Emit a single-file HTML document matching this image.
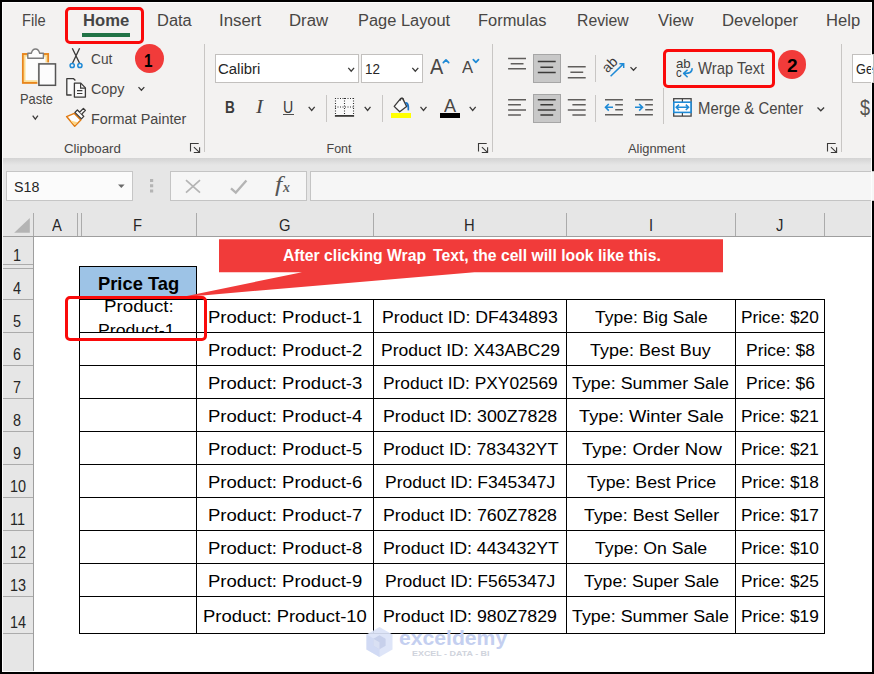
<!DOCTYPE html>
<html lang="en"><head><meta charset="utf-8"><title>Excel Wrap Text</title>
<style>
html,body{margin:0;padding:0;background:#000;}
body{width:874px;height:674px;overflow:hidden;position:relative;font-family:"Liberation Sans",sans-serif;}
#app{position:absolute;left:0;top:0;width:874px;height:674px;overflow:hidden;background:#000;}
.r{position:absolute;}
.t{position:absolute;white-space:pre;line-height:1;transform-origin:0 0;}
svg{position:absolute;overflow:visible;}
</style></head><body><div id="app">
<div class="r" style="left:2.00px;top:2.00px;width:870.00px;height:155.50px;background:#f3f2f1;"></div>
<div class="r" style="left:2.00px;top:157.50px;width:870.00px;height:7.50px;background:linear-gradient(#d3d3d3,#e6e6e6);"></div>
<div class="r" style="left:2.00px;top:165.00px;width:870.00px;height:72.00px;background:#e6e6e6;"></div>
<div class="r" style="left:2.00px;top:237.00px;width:870.00px;height:435.00px;background:#fff;"></div>
<div class="r" style="left:2.00px;top:237.00px;width:31.00px;height:435.00px;background:#e6e6e6;"></div>
<span class="t" style="left:21.90px;top:13.03px;font-size:16.85px;color:#484644;transform:scaleX(0.8697);">File</span>
<span class="t" style="left:156.60px;top:13.03px;font-size:16.85px;color:#484644;transform:scaleX(0.9763);">Data</span>
<span class="t" style="left:219.30px;top:13.03px;font-size:16.85px;color:#484644;transform:scaleX(0.9992);">Insert</span>
<span class="t" style="left:289.20px;top:13.03px;font-size:16.85px;color:#484644;transform:scaleX(0.9961);">Draw</span>
<span class="t" style="left:357.60px;top:13.03px;font-size:16.85px;color:#484644;transform:scaleX(0.9743);">Page Layout</span>
<span class="t" style="left:478.40px;top:13.03px;font-size:16.85px;color:#484644;transform:scaleX(0.9761);">Formulas</span>
<span class="t" style="left:576.50px;top:13.03px;font-size:16.85px;color:#484644;transform:scaleX(0.9370);">Review</span>
<span class="t" style="left:657.70px;top:13.03px;font-size:16.85px;color:#484644;transform:scaleX(0.9824);">View</span>
<span class="t" style="left:721.70px;top:13.03px;font-size:16.85px;color:#484644;transform:scaleX(0.9915);">Developer</span>
<span class="t" style="left:826.30px;top:13.03px;font-size:16.85px;color:#484644;transform:scaleX(0.9846);">Help</span>
<span class="t" style="left:82.60px;top:13.03px;font-size:16.85px;color:#454545;transform:scaleX(0.9860);font-weight:bold;">Home</span>
<div class="r" style="left:82.00px;top:33.00px;width:48.00px;height:4.00px;background:#217346;"></div>
<div class="r" style="left:65px;top:7px;width:79px;height:37px;box-sizing:border-box;border:3px solid #fa0a0a;border-radius:5px;"></div>
<span class="t" style="left:19.50px;top:92.27px;font-size:14.33px;color:#484644;transform:scaleX(0.9016);">Paste</span>
<span class="t" style="left:90.60px;top:52.25px;font-size:14.47px;color:#484644;transform:scaleX(0.9469);">Cut</span>
<span class="t" style="left:90.60px;top:82.47px;font-size:14.33px;color:#484644;transform:scaleX(0.9985);">Copy</span>
<span class="t" style="left:90.60px;top:111.81px;font-size:14.04px;color:#484644;transform:scaleX(1.0268);">Format Painter</span>
<span class="t" style="left:63.70px;top:142.92px;font-size:12.50px;color:#484644;transform:scaleX(1.0636);">Clipboard</span>
<div class="r" style="left:204.00px;top:43.70px;width:1.00px;height:108.70px;background:#c8c6c4;"></div>
<div class="r" style="left:135.1px;top:43.9px;width:29.1px;height:29.1px;border-radius:50%;background:#f13b3a;"></div>
<div class="r" style="left:214.7px;top:53.8px;width:144.2px;height:29.3px;box-sizing:border-box;border:1px solid #c2c0be;background:#fff;"></div>
<div class="r" style="left:360.8px;top:53.8px;width:62.2px;height:29.3px;box-sizing:border-box;border:1px solid #c2c0be;background:#fff;"></div>
<span class="t" style="left:218.00px;top:62.01px;font-size:14.75px;color:#262626;transform:scaleX(1.0118);">Calibri</span>
<span class="t" style="left:365.00px;top:62.01px;font-size:14.75px;color:#262626;transform:scaleX(0.9102);">12</span>
<span class="t" style="left:430.30px;top:56.39px;font-size:21.63px;color:#484644;transform:scaleX(0.9178);">A</span>
<span class="t" style="left:462.20px;top:60.43px;font-size:16.85px;color:#484644;transform:scaleX(0.9830);">A</span>
<span class="t" style="left:224.61px;top:98.71px;font-size:16.99px;color:#3a3a3a;transform:scaleX(0.8000);font-weight:bold;">B</span>
<span class="t" style="left:255.51px;top:97.60px;font-size:18.63px;color:#444;transform:scaleX(1.1303);font-family:'Liberation Serif',serif;font-style:italic;">I</span>
<span class="t" style="left:283.40px;top:98.71px;font-size:16.99px;color:#3a3a3a;transform:scaleX(0.8336);">U</span>
<div class="r" style="left:282.60px;top:114.10px;width:11.80px;height:1.40px;background:#4f4f4f;"></div>
<div class="r" style="left:326.00px;top:95.00px;width:1.00px;height:26.60px;background:#c8c6c4;"></div>
<div class="r" style="left:382.00px;top:95.00px;width:1.00px;height:26.60px;background:#c8c6c4;"></div>
<span class="t" style="left:444.20px;top:96.74px;font-size:18.26px;color:#484644;transform:scaleX(0.9891);">A</span>
<div class="r" style="left:391.00px;top:112.90px;width:20.20px;height:5.00px;background:#ffff00;"></div>
<div class="r" style="left:439.90px;top:112.90px;width:20.10px;height:5.00px;background:#000;"></div>
<span class="t" style="left:326.50px;top:142.92px;font-size:12.50px;color:#484644;transform:scaleX(1.0000);">Font</span>
<div class="r" style="left:492.30px;top:43.70px;width:1.00px;height:108.70px;background:#c8c6c4;"></div>
<span class="t" style="left:697.60px;top:61.28px;font-size:15.73px;color:#484644;transform:scaleX(0.9454);">Wrap Text</span>
<span class="t" style="left:697.60px;top:101.17px;font-size:16.57px;color:#484644;transform:scaleX(0.8991);">Merge &amp; Center</span>
<span class="t" style="left:628.40px;top:142.92px;font-size:12.50px;color:#484644;transform:scaleX(1.0295);">Alignment</span>
<div class="r" style="left:841.20px;top:43.70px;width:1.00px;height:108.70px;background:#c8c6c4;"></div>
<div class="r" style="left:595.00px;top:54.80px;width:1.00px;height:27.00px;background:#c8c6c4;"></div>
<div class="r" style="left:595.00px;top:95.20px;width:1.00px;height:26.60px;background:#c8c6c4;"></div>
<div class="r" style="left:663.20px;top:88.00px;width:1.00px;height:36.40px;background:#c8c6c4;"></div>
<div class="r" style="left:532.5px;top:54px;width:28.5px;height:28.8px;box-sizing:border-box;border:1px solid #a6a6a6;background:#c8c8c8;"></div>
<div class="r" style="left:532.5px;top:94.2px;width:28.5px;height:28.8px;box-sizing:border-box;border:1px solid #a6a6a6;background:#c8c8c8;"></div>
<div class="r" style="left:663px;top:49px;width:112px;height:39px;box-sizing:border-box;border:3px solid #fa0a0a;border-radius:5px;"></div>
<div class="r" style="left:778.1px;top:50.4px;width:28.4px;height:28.4px;border-radius:50%;background:#f13b3a;"></div>
<div class="r" style="left:851.7px;top:54px;width:22px;height:29px;box-sizing:border-box;border:1px solid #c2c0be;background:#fff;"></div>
<span class="t" style="left:855.50px;top:62.01px;font-size:14.75px;color:#262626;transform:scaleX(0.8635);">Ge</span>
<span class="t" style="left:860.30px;top:97.05px;font-size:22.50px;color:#55534f;transform:scaleX(0.8000);">$</span>
<div class="r" style="left:5.8px;top:171px;width:127.3px;height:29.8px;box-sizing:border-box;border:1px solid #c6c6c6;background:#fbfbfb;"></div>
<span class="t" style="left:13.50px;top:179.93px;font-size:14.61px;color:#262626;transform:scaleX(0.9769);">S18</span>
<div class="r" style="left:169.9px;top:171px;width:136.9px;height:29.8px;box-sizing:border-box;border:1px solid #c4c4c4;background:#f6f6f6;"></div>
<div class="r" style="left:309.5px;top:171px;width:570px;height:29.8px;box-sizing:border-box;border:1px solid #c4c4c4;background:#f6f6f6;"></div>
<span class="t" style="left:275.40px;top:174.20px;font-size:21.50px;color:#555;transform:scaleX(1.2000);font-family:'Liberation Serif',serif;font-style:italic;">f</span>
<span class="t" style="left:283.01px;top:180.46px;font-size:14.50px;color:#5e5e5e;transform:scaleX(0.9508);font-family:'Liberation Serif',serif;font-weight:bold;font-style:italic;">x</span>
<div class="r" style="left:2.00px;top:236.00px;width:870.00px;height:1.00px;background:#9e9e9e;"></div>
<div class="r" style="left:33.00px;top:213.00px;width:1.00px;height:23.00px;background:#ababab;"></div>
<div class="r" style="left:77.20px;top:213.00px;width:1.00px;height:23.00px;background:#ababab;"></div>
<div class="r" style="left:80.70px;top:213.00px;width:1.00px;height:23.00px;background:#ababab;"></div>
<div class="r" style="left:196.30px;top:213.00px;width:1.00px;height:23.00px;background:#ababab;"></div>
<div class="r" style="left:373.20px;top:213.00px;width:1.00px;height:23.00px;background:#ababab;"></div>
<div class="r" style="left:566.30px;top:213.00px;width:1.00px;height:23.00px;background:#ababab;"></div>
<div class="r" style="left:734.80px;top:213.00px;width:1.00px;height:23.00px;background:#ababab;"></div>
<div class="r" style="left:824.20px;top:213.00px;width:1.00px;height:23.00px;background:#ababab;"></div>
<span class="t" style="left:51.56px;top:218.06px;font-size:15.87px;color:#262626;transform:scaleX(0.9300);">A</span>
<span class="t" style="left:133.30px;top:218.06px;font-size:15.87px;color:#262626;transform:scaleX(0.9300);">F</span>
<span class="t" style="left:279.24px;top:218.06px;font-size:15.87px;color:#262626;transform:scaleX(0.9300);">G</span>
<span class="t" style="left:464.49px;top:218.06px;font-size:15.87px;color:#262626;transform:scaleX(0.9300);">H</span>
<span class="t" style="left:649.13px;top:218.06px;font-size:15.87px;color:#262626;transform:scaleX(0.9300);">I</span>
<span class="t" style="left:775.51px;top:218.06px;font-size:15.87px;color:#262626;transform:scaleX(0.9300);">J</span>
<svg style="left:14px;top:217.8px" width="16" height="15" viewBox="0 0 16 15"><path d="M15.8 0V14.7H0.2Z" fill="#b4b4b4"/></svg>
<div class="r" style="left:33.00px;top:237.00px;width:1.00px;height:435.00px;background:#9e9e9e;"></div>
<div class="r" style="left:2.00px;top:264.00px;width:31.00px;height:1.00px;background:#ababab;"></div>
<div class="r" style="left:2.00px;top:268.00px;width:31.00px;height:1.00px;background:#ababab;"></div>
<div class="r" style="left:2.00px;top:299.00px;width:31.00px;height:1.00px;background:#ababab;"></div>
<div class="r" style="left:2.00px;top:332.00px;width:31.00px;height:1.00px;background:#ababab;"></div>
<div class="r" style="left:2.00px;top:365.00px;width:31.00px;height:1.00px;background:#ababab;"></div>
<div class="r" style="left:2.00px;top:398.00px;width:31.00px;height:1.00px;background:#ababab;"></div>
<div class="r" style="left:2.00px;top:431.00px;width:31.00px;height:1.00px;background:#ababab;"></div>
<div class="r" style="left:2.00px;top:464.00px;width:31.00px;height:1.00px;background:#ababab;"></div>
<div class="r" style="left:2.00px;top:497.00px;width:31.00px;height:1.00px;background:#ababab;"></div>
<div class="r" style="left:2.00px;top:530.00px;width:31.00px;height:1.00px;background:#ababab;"></div>
<div class="r" style="left:2.00px;top:563.00px;width:31.00px;height:1.00px;background:#ababab;"></div>
<div class="r" style="left:2.00px;top:596.00px;width:31.00px;height:1.00px;background:#ababab;"></div>
<div class="r" style="left:2.00px;top:633.00px;width:31.00px;height:1.00px;background:#ababab;"></div>
<span class="t" style="left:12.70px;top:248.04px;font-size:16.01px;color:#262626;transform:scaleX(0.9000);">1</span>
<span class="t" style="left:12.70px;top:280.94px;font-size:16.01px;color:#262626;transform:scaleX(0.9000);">4</span>
<span class="t" style="left:12.70px;top:313.94px;font-size:16.01px;color:#262626;transform:scaleX(0.9000);">5</span>
<span class="t" style="left:12.70px;top:346.94px;font-size:16.01px;color:#262626;transform:scaleX(0.9000);">6</span>
<span class="t" style="left:12.70px;top:379.94px;font-size:16.01px;color:#262626;transform:scaleX(0.9000);">7</span>
<span class="t" style="left:12.70px;top:412.94px;font-size:16.01px;color:#262626;transform:scaleX(0.9000);">8</span>
<span class="t" style="left:12.70px;top:445.94px;font-size:16.01px;color:#262626;transform:scaleX(0.9000);">9</span>
<span class="t" style="left:9.60px;top:478.94px;font-size:16.01px;color:#262626;transform:scaleX(0.9000);">10</span>
<span class="t" style="left:10.11px;top:511.94px;font-size:16.01px;color:#262626;transform:scaleX(0.9000);">11</span>
<span class="t" style="left:9.60px;top:544.94px;font-size:16.01px;color:#262626;transform:scaleX(0.9000);">12</span>
<span class="t" style="left:9.60px;top:577.94px;font-size:16.01px;color:#262626;transform:scaleX(0.9000);">13</span>
<span class="t" style="left:9.60px;top:615.14px;font-size:16.01px;color:#262626;transform:scaleX(0.9000);">14</span>
<div class="r" style="left:80.00px;top:267.00px;width:116.00px;height:32.00px;background:#9dc3e6;"></div>
<div class="r" style="left:79.00px;top:266.00px;width:1.00px;height:368.00px;background:#000;"></div>
<div class="r" style="left:196.00px;top:266.00px;width:1.00px;height:368.00px;background:#000;"></div>
<div class="r" style="left:373.00px;top:299.00px;width:1.00px;height:335.00px;background:#000;"></div>
<div class="r" style="left:566.00px;top:299.00px;width:1.00px;height:335.00px;background:#000;"></div>
<div class="r" style="left:735.00px;top:299.00px;width:1.00px;height:335.00px;background:#000;"></div>
<div class="r" style="left:824.00px;top:299.00px;width:1.00px;height:335.00px;background:#000;"></div>
<div class="r" style="left:79.00px;top:266.00px;width:118.00px;height:1.00px;background:#000;"></div>
<div class="r" style="left:79.00px;top:299.00px;width:746.00px;height:1.00px;background:#000;"></div>
<div class="r" style="left:79.00px;top:332.00px;width:746.00px;height:1.00px;background:#000;"></div>
<div class="r" style="left:79.00px;top:365.00px;width:746.00px;height:1.00px;background:#000;"></div>
<div class="r" style="left:79.00px;top:398.00px;width:746.00px;height:1.00px;background:#000;"></div>
<div class="r" style="left:79.00px;top:431.00px;width:746.00px;height:1.00px;background:#000;"></div>
<div class="r" style="left:79.00px;top:464.00px;width:746.00px;height:1.00px;background:#000;"></div>
<div class="r" style="left:79.00px;top:497.00px;width:746.00px;height:1.00px;background:#000;"></div>
<div class="r" style="left:79.00px;top:530.00px;width:746.00px;height:1.00px;background:#000;"></div>
<div class="r" style="left:79.00px;top:563.00px;width:746.00px;height:1.00px;background:#000;"></div>
<div class="r" style="left:79.00px;top:596.00px;width:746.00px;height:1.00px;background:#000;"></div>
<div class="r" style="left:79.00px;top:633.00px;width:746.00px;height:1.00px;background:#000;"></div>
<span class="t" style="left:97.80px;top:276.14px;font-size:17.56px;color:#000;transform:scaleX(1.0441);font-weight:bold;">Price Tag</span>
<span class="t" style="left:208.00px;top:309.21px;font-size:16.99px;color:#000;transform:scaleX(1.0894);">Product: Product-1</span>
<span class="t" style="left:382.10px;top:309.21px;font-size:16.99px;color:#000;transform:scaleX(1.0397);">Product ID: DF434893</span>
<span class="t" style="left:594.60px;top:309.21px;font-size:16.99px;color:#000;transform:scaleX(1.0291);">Type: Big Sale</span>
<span class="t" style="left:741.00px;top:309.21px;font-size:16.99px;color:#000;transform:scaleX(1.0175);">Price: $20</span>
<span class="t" style="left:208.00px;top:342.21px;font-size:16.99px;color:#000;transform:scaleX(1.0894);">Product: Product-2</span>
<span class="t" style="left:380.60px;top:342.21px;font-size:16.99px;color:#000;transform:scaleX(1.0302);">Product ID: X43ABC29</span>
<span class="t" style="left:590.40px;top:342.21px;font-size:16.99px;color:#000;transform:scaleX(1.0570);">Type: Best Buy</span>
<span class="t" style="left:745.80px;top:342.21px;font-size:16.99px;color:#000;transform:scaleX(1.0277);">Price: $8</span>
<span class="t" style="left:208.00px;top:375.21px;font-size:16.99px;color:#000;transform:scaleX(1.0894);">Product: Product-3</span>
<span class="t" style="left:383.10px;top:375.21px;font-size:16.99px;color:#000;transform:scaleX(1.0224);">Product ID: PXY02569</span>
<span class="t" style="left:572.20px;top:375.21px;font-size:16.99px;color:#000;transform:scaleX(1.0522);">Type: Summer Sale</span>
<span class="t" style="left:745.80px;top:375.21px;font-size:16.99px;color:#000;transform:scaleX(1.0277);">Price: $6</span>
<span class="t" style="left:208.00px;top:408.21px;font-size:16.99px;color:#000;transform:scaleX(1.0894);">Product: Product-4</span>
<span class="t" style="left:383.10px;top:408.21px;font-size:16.99px;color:#000;transform:scaleX(1.0482);">Product ID: 300Z7828</span>
<span class="t" style="left:579.20px;top:408.21px;font-size:16.99px;color:#000;transform:scaleX(1.0799);">Type: Winter Sale</span>
<span class="t" style="left:741.00px;top:408.21px;font-size:16.99px;color:#000;transform:scaleX(1.0175);">Price: $21</span>
<span class="t" style="left:208.00px;top:441.21px;font-size:16.99px;color:#000;transform:scaleX(1.0894);">Product: Product-5</span>
<span class="t" style="left:383.10px;top:441.21px;font-size:16.99px;color:#000;transform:scaleX(1.0425);">Product ID: 783432YT</span>
<span class="t" style="left:581.80px;top:441.21px;font-size:16.99px;color:#000;transform:scaleX(1.0897);">Type: Order Now</span>
<span class="t" style="left:741.00px;top:441.21px;font-size:16.99px;color:#000;transform:scaleX(1.0175);">Price: $21</span>
<span class="t" style="left:208.00px;top:474.21px;font-size:16.99px;color:#000;transform:scaleX(1.0894);">Product: Product-6</span>
<span class="t" style="left:384.70px;top:474.21px;font-size:16.99px;color:#000;transform:scaleX(1.0299);">Product ID: F345347J</span>
<span class="t" style="left:587.20px;top:474.21px;font-size:16.99px;color:#000;transform:scaleX(1.0443);">Type: Best Price</span>
<span class="t" style="left:741.00px;top:474.21px;font-size:16.99px;color:#000;transform:scaleX(1.0175);">Price: $18</span>
<span class="t" style="left:208.00px;top:507.21px;font-size:16.99px;color:#000;transform:scaleX(1.0894);">Product: Product-7</span>
<span class="t" style="left:382.80px;top:507.21px;font-size:16.99px;color:#000;transform:scaleX(1.0470);">Product ID: 760Z7828</span>
<span class="t" style="left:584.00px;top:507.21px;font-size:16.99px;color:#000;transform:scaleX(1.0523);">Type: Best Seller</span>
<span class="t" style="left:741.00px;top:507.21px;font-size:16.99px;color:#000;transform:scaleX(1.0175);">Price: $17</span>
<span class="t" style="left:208.00px;top:540.21px;font-size:16.99px;color:#000;transform:scaleX(1.0894);">Product: Product-8</span>
<span class="t" style="left:382.80px;top:540.21px;font-size:16.99px;color:#000;transform:scaleX(1.0466);">Product ID: 443432YT</span>
<span class="t" style="left:595.20px;top:540.21px;font-size:16.99px;color:#000;transform:scaleX(1.0422);">Type: On Sale</span>
<span class="t" style="left:741.00px;top:540.21px;font-size:16.99px;color:#000;transform:scaleX(1.0175);">Price: $10</span>
<span class="t" style="left:208.00px;top:573.21px;font-size:16.99px;color:#000;transform:scaleX(1.0894);">Product: Product-9</span>
<span class="t" style="left:384.70px;top:573.21px;font-size:16.99px;color:#000;transform:scaleX(1.0299);">Product ID: F565347J</span>
<span class="t" style="left:584.00px;top:573.21px;font-size:16.99px;color:#000;transform:scaleX(1.0372);">Type: Super Sale</span>
<span class="t" style="left:741.00px;top:573.21px;font-size:16.99px;color:#000;transform:scaleX(1.0175);">Price: $25</span>
<span class="t" style="left:203.30px;top:607.91px;font-size:16.99px;color:#000;transform:scaleX(1.0842);">Product: Product-10</span>
<span class="t" style="left:382.80px;top:607.91px;font-size:16.99px;color:#000;transform:scaleX(1.0470);">Product ID: 980Z7829</span>
<span class="t" style="left:572.20px;top:607.91px;font-size:16.99px;color:#000;transform:scaleX(1.0522);">Type: Summer Sale</span>
<span class="t" style="left:741.00px;top:607.91px;font-size:16.99px;color:#000;transform:scaleX(1.0175);">Price: $19</span>
<div class="r" style="left:80px;top:300px;width:116px;height:32px;overflow:hidden;">
<span class="t" style="left:23.50px;top:-2.29px;font-size:16.99px;color:#000;transform:scaleX(1.1026);">Product:</span>
<span class="t" style="left:17.80px;top:22.11px;font-size:16.99px;color:#000;transform:scaleX(1.0398);">Product-1</span>
</div>
<svg style="left:0;top:0" width="874" height="674" viewBox="0 0 874 674"><path d="M219 239.2H723V272.2H474.4L179.6 297.4L302 272.2H219Z" fill="#f13b3a"/></svg>
<span class="t" style="left:282.60px;top:247.94px;font-size:16.01px;color:#fff;transform:scaleX(0.9829);font-weight:bold;">After clicking Wrap  Text, the cell will look like this.</span>
<div class="r" style="left:65px;top:296px;width:142px;height:45px;box-sizing:border-box;border:3px solid #fa0a0a;border-radius:5px;"></div>
<span class="t" style="left:143.91px;top:50.53px;font-size:19.10px;color:#000;transform:scaleX(0.8000);font-weight:bold;">1</span>
<span class="t" style="left:786.80px;top:57.06px;font-size:18.82px;color:#000;transform:scaleX(1.0148);font-weight:bold;">2</span>
<span class="t" style="left:399.20px;top:628.34px;font-size:20.50px;color:#c4cff0;transform:scaleX(1.0319);font-weight:bold;">exceldemy</span>
<span class="t" style="left:412.36px;top:649.50px;font-size:7.44px;color:#cfd3dc;transform:scaleX(1.2000);font-weight:bold;">EXCEL - DATA - BI</span>
<svg style="left:14px;top:44px" width="48" height="48" viewBox="0 0 48 48"><rect x="8.9" y="10" width="25.2" height="28.9" fill="#fdfdfd" stroke="#e8861c" stroke-width="1.9"/><rect x="10.7" y="11.8" width="21.6" height="25.3" fill="none" stroke="#fbdc8f" stroke-width="1.6"/><path d="M13.8 9.2H17.4C18.6 3.6 24.4 3.6 25.6 9.2H29.4V14.2H13.8Z" fill="#fdfdfd" stroke="#7d7d7d" stroke-width="1.4" stroke-linejoin="round"/><rect x="23.4" y="18.4" width="19.6" height="24.4" fill="#f3f2f1"/><rect x="24.9" y="19.9" width="16.6" height="21.4" fill="#fcfcfc" stroke="#555" stroke-width="1.5"/></svg>
<svg style="left:0px;top:0px" width="874" height="674" viewBox="0 0 874 674"><path d="M32.7 115.7L35.3 119.1L37.9 115.7" fill="none" stroke="#3b3a39" stroke-width="1.3" stroke-linejoin="miter"/></svg>
<svg style="left:62px;top:44px" width="30" height="30" viewBox="0 0 30 30"><path d="M10.3 4.2L17.5 19M17.6 4.2L10.6 19" fill="none" stroke="#3b3a39" stroke-width="1.35"/><circle cx="10.2" cy="21.5" r="2.1" fill="none" stroke="#1e8ad6" stroke-width="1.5"/><circle cx="17.9" cy="21.5" r="2.1" fill="none" stroke="#1e8ad6" stroke-width="1.5"/></svg>
<svg style="left:60px;top:72px" width="36" height="30" viewBox="0 0 36 30"><path d="M11.6 23H6.8V6.7H13.6L15.4 8.5" fill="#fafafa" stroke="#3b3a39" stroke-width="1.3" stroke-linejoin="round"/><path d="M14.4 11.1H20.8L25.4 15.9V25.1H14.4Z" fill="#fafafa" stroke="#3b3a39" stroke-width="1.3" stroke-linejoin="round"/><path d="M20.6 11.3V16.1H25.2" fill="none" stroke="#3b3a39" stroke-width="1.2"/><path d="M17 18.6H22.4M17 21.5H22.4" fill="none" stroke="#3b3a39" stroke-width="1.2"/></svg>
<svg style="left:0px;top:0px" width="874" height="674" viewBox="0 0 874 674"><path d="M138.5 87.1L141.4 90.2L144.3 87.1" fill="none" stroke="#3b3a39" stroke-width="1.3" stroke-linejoin="miter"/></svg>
<svg style="left:60px;top:100px" width="36" height="30" viewBox="0 0 36 30"><path d="M6.6 16.6L14.3 13.4L20.8 20L14.7 26.2Z" fill="#fdfdfd" stroke="#e07b12" stroke-width="1.5" stroke-linejoin="round"/><path d="M10.2 20.6L17.6 22.2L14.7 25.2Z" fill="#fcd685"/><path d="M14.9 12.4L17.4 10L23.8 16.4L21.4 18.9Z" fill="#fdfdfd" stroke="#3b3a39" stroke-width="1.3" stroke-linejoin="round"/><path d="M19.6 12.2L23.4 8.4L25.4 10.4L21.6 14.2" fill="#fdfdfd" stroke="#3b3a39" stroke-width="1.3" stroke-linejoin="round"/></svg>
<svg style="left:190px;top:143px" width="11" height="11" viewBox="0 0 11 11"><path d="M0.5 8.6V0.5H8.7M3.9 4.1L9.5 9.4M3.8 9.5H9.6V4.3" fill="none" stroke="#3b3a39" stroke-width="1.1"/></svg>
<svg style="left:478px;top:143px" width="11" height="11" viewBox="0 0 11 11"><path d="M0.5 8.6V0.5H8.7M3.9 4.1L9.5 9.4M3.8 9.5H9.6V4.3" fill="none" stroke="#3b3a39" stroke-width="1.1"/></svg>
<svg style="left:827.4px;top:143px" width="11" height="11" viewBox="0 0 11 11"><path d="M0.5 8.6V0.5H8.7M3.9 4.1L9.5 9.4M3.8 9.5H9.6V4.3" fill="none" stroke="#3b3a39" stroke-width="1.1"/></svg>
<svg style="left:0px;top:0px" width="874" height="674" viewBox="0 0 874 674"><path d="M348.3 67.9L351.2 71.2L354.1 67.9" fill="none" stroke="#3b3a39" stroke-width="1.3" stroke-linejoin="miter"/></svg>
<svg style="left:0px;top:0px" width="874" height="674" viewBox="0 0 874 674"><path d="M412.3 67.9L415.3 71.2L418.3 67.9" fill="none" stroke="#3b3a39" stroke-width="1.3" stroke-linejoin="miter"/></svg>
<svg style="left:0px;top:0px" width="874" height="674" viewBox="0 0 874 674"><path d="M443.3 62.6L446 59.8L448.7 62.6" fill="none" stroke="#1e8ad6" stroke-width="1.7" stroke-linecap="round" stroke-linejoin="round"/><path d="M473.3 59.6L475.9 62.4L478.5 59.6" fill="none" stroke="#1e8ad6" stroke-width="1.7" stroke-linecap="round" stroke-linejoin="round"/></svg>
<svg style="left:0px;top:0px" width="874" height="674" viewBox="0 0 874 674"><path d="M308.7 106.9L311.7 110.4L314.7 106.9" fill="none" stroke="#3b3a39" stroke-width="1.3" stroke-linejoin="miter"/></svg>
<svg style="left:334px;top:97px" width="22" height="21" viewBox="0 0 22 21"><rect x="1" y="1" width="19" height="18" fill="#fafafa"/><path d="M1.5 1V18.5M10.5 1V18.5M19.5 1V18.5" fill="none" stroke="#2f2f2f" stroke-width="1.1" stroke-dasharray="1 1.5"/><path d="M1 1.5H20M1 10H20" fill="none" stroke="#2f2f2f" stroke-width="1.1" stroke-dasharray="1 1.5"/><path d="M0.9 18.9H20.1" fill="none" stroke="#3b3a39" stroke-width="1.8"/></svg>
<svg style="left:0px;top:0px" width="874" height="674" viewBox="0 0 874 674"><path d="M364.7 106.9L367.6 110.4L370.5 106.9" fill="none" stroke="#3b3a39" stroke-width="1.3" stroke-linejoin="miter"/></svg>
<svg style="left:386px;top:90px" width="30" height="30" viewBox="0 0 30 30"><path d="M8.2 16.4L14.6 8.6L16.6 8.4L20.6 16.4L13.7 21.8Z" fill="#fafafa" stroke="#3b3a39" stroke-width="1.3" stroke-linejoin="round"/><path d="M14.2 10.8C14 7.4 17.6 7 17.6 10.4" fill="none" stroke="#3b3a39" stroke-width="1.2"/><path d="M18.9 12.3C21.6 11.2 23.9 13.8 23.1 20.6L21.5 20.3C21.8 16.8 21 14.4 18.9 12.3Z" fill="#1b72c4"/></svg>
<svg style="left:0px;top:0px" width="874" height="674" viewBox="0 0 874 674"><path d="M420.5 106.9L423.5 110.4L426.5 106.9" fill="none" stroke="#3b3a39" stroke-width="1.3" stroke-linejoin="miter"/></svg>
<svg style="left:0px;top:0px" width="874" height="674" viewBox="0 0 874 674"><path d="M469.7 106.9L472.7 110.4L475.7 106.9" fill="none" stroke="#3b3a39" stroke-width="1.3" stroke-linejoin="miter"/></svg>
<svg style="left:0px;top:0px" width="874" height="674" viewBox="0 0 874 674"><path d="M508.1 58.5H526M510.7 63.7H523.5M508.1 68.8H526" fill="none" stroke="#605e5c" stroke-width="1.5"/></svg>
<svg style="left:0px;top:0px" width="874" height="674" viewBox="0 0 874 674"><path d="M537.8 61.6H555.7M540.4 67.2H553.2M537.8 72.5H555.7" fill="none" stroke="#3b3a39" stroke-width="1.5"/></svg>
<svg style="left:0px;top:0px" width="874" height="674" viewBox="0 0 874 674"><path d="M567.8 66.8H585.7M570.4 72.3H583.2M567.8 77.7H585.7" fill="none" stroke="#605e5c" stroke-width="1.5"/></svg>
<svg style="left:0px;top:0px" width="874" height="674" viewBox="0 0 874 674"><path d="M508.1 99.7H526M508.1 104.8H520.9M508.1 109.9H526M508.1 114.9H520.9" fill="none" stroke="#605e5c" stroke-width="1.5"/></svg>
<svg style="left:0px;top:0px" width="874" height="674" viewBox="0 0 874 674"><path d="M537.8 99.7H555.7M540.4 104.8H553.2M537.8 109.9H555.7M540.4 114.9H553.2" fill="none" stroke="#3b3a39" stroke-width="1.5"/></svg>
<svg style="left:0px;top:0px" width="874" height="674" viewBox="0 0 874 674"><path d="M567.8 99.7H585.7M572.4 104.8H585.7M567.8 109.9H585.7M572.4 114.9H585.7" fill="none" stroke="#605e5c" stroke-width="1.5"/></svg>
<span class="t" style="left:609.2px;top:61px;font-size:14px;color:#3b3a39;transform-origin:0 100%;transform:rotate(-45deg);">ab</span>
<svg style="left:0px;top:0px" width="874" height="674" viewBox="0 0 874 674"><path d="M610.6 76.2L623.4 63.9M619.4 63.7H623.7V68" fill="none" stroke="#1e8ad6" stroke-width="1.5" stroke-linejoin="miter"/></svg>
<svg style="left:0px;top:0px" width="874" height="674" viewBox="0 0 874 674"><path d="M630.5 67.1L633.5 70.3L636.5 67.1" fill="none" stroke="#3b3a39" stroke-width="1.3" stroke-linejoin="miter"/></svg>
<svg style="left:0px;top:0px" width="874" height="674" viewBox="0 0 874 674"><path d="M605 99.8H622.9M605 114.8H622.9" fill="none" stroke="#605e5c" stroke-width="1.5"/></svg>
<svg style="left:0px;top:0px" width="874" height="674" viewBox="0 0 874 674"><path d="M615.2 104.8H622.9M615.2 109.8H622.9" fill="none" stroke="#605e5c" stroke-width="1.5"/></svg>
<svg style="left:0px;top:0px" width="874" height="674" viewBox="0 0 874 674"><path d="M635 99.8H652.9M635 114.8H652.9" fill="none" stroke="#605e5c" stroke-width="1.5"/></svg>
<svg style="left:0px;top:0px" width="874" height="674" viewBox="0 0 874 674"><path d="M645.2 104.8H652.9M645.2 109.8H652.9" fill="none" stroke="#605e5c" stroke-width="1.5"/></svg>
<svg style="left:0px;top:0px" width="874" height="674" viewBox="0 0 874 674"><path d="M613 107.3H605.6M608.8 104L605.5 107.3L608.8 110.6" fill="none" stroke="#1e8ad6" stroke-width="1.6"/><path d="M635 107.3H642.4M639.2 104L642.5 107.3L639.2 110.6" fill="none" stroke="#1e8ad6" stroke-width="1.6"/></svg>
<span class="t" style="left:676.30px;top:57.53px;font-size:12.60px;color:#3b3a39;transform:scaleX(1.0511);">ab</span>
<span class="t" style="left:676.30px;top:66.73px;font-size:12.60px;color:#3b3a39;transform:scaleX(0.9048);">c</span>
<svg style="left:0px;top:0px" width="874" height="674" viewBox="0 0 874 674"><path d="M692 68.2C692.6 72.6 689 73.6 684 73.4M687.6 69.8L683.6 73.4L687.6 77.2" fill="none" stroke="#1e8ad6" stroke-width="1.5" stroke-linejoin="round"/></svg>
<svg style="left:668px;top:92px" width="32" height="32" viewBox="0 0 32 32"><rect x="5.7" y="6.7" width="17.4" height="17.4" fill="#fdfdfd" stroke="#444" stroke-width="1.3"/><path d="M14.4 6.7V24.1" stroke="#444" stroke-width="1.2"/><rect x="5.8" y="10.2" width="17.2" height="10.2" fill="#fdfdfd" stroke="#1e8ad6" stroke-width="1.6"/><path d="M8.4 15.3H20.4M11 12.6L8.2 15.3L11 18M17.8 12.6L20.6 15.3L17.8 18" fill="none" stroke="#1e8ad6" stroke-width="1.5"/></svg>
<svg style="left:0px;top:0px" width="874" height="674" viewBox="0 0 874 674"><path d="M817.5 107.5L820.8 110.8L824.1 107.5" fill="none" stroke="#3b3a39" stroke-width="1.3" stroke-linejoin="miter"/></svg>
<svg style="left:0px;top:0px" width="874" height="674" viewBox="0 0 874 674"><path d="M118 184.4H124.6L121.3 188Z" fill="#6a6a6a"/><path d="M150 179H153.2V182H150ZM150 184.2H153.2V187.2H150ZM150 189.4H153.2V192.4H150Z" fill="#b4b4b4"/><path d="M186 180.2L200 192.6M200 180.2L186 192.6" fill="none" stroke="#b4b4b4" stroke-width="1.7"/><path d="M231 188.4L235.8 192.6L246.4 180.4" fill="none" stroke="#b4b4b4" stroke-width="2.3"/></svg>
<svg style="left:366px;top:626px" width="28" height="32" viewBox="0 0 28 32"><path d="M13.5 1L26.5 8.4V23.6L13.5 31L0.5 23.6V8.4Z" fill="#dbe3f7" fill-opacity="0.92"/><path d="M0.5 8.4L13.5 15.8V31L0.5 23.6Z" fill="#cfd9f3" fill-opacity="0.92"/><path d="M13.5 9.2L19.6 12.7V19.7L13.5 23.2L7.4 19.7V12.7Z" fill="#c4cde9" fill-opacity="0.9"/><path d="M7.4 12.7L13.5 16.2V23.2L7.4 19.7Z" fill="#d9e0f3"/></svg>
<div class="r" style="left:2px;top:2px;width:870px;height:670px;box-sizing:border-box;border:1px solid #fdfdfd;"></div>
</div></body></html>
